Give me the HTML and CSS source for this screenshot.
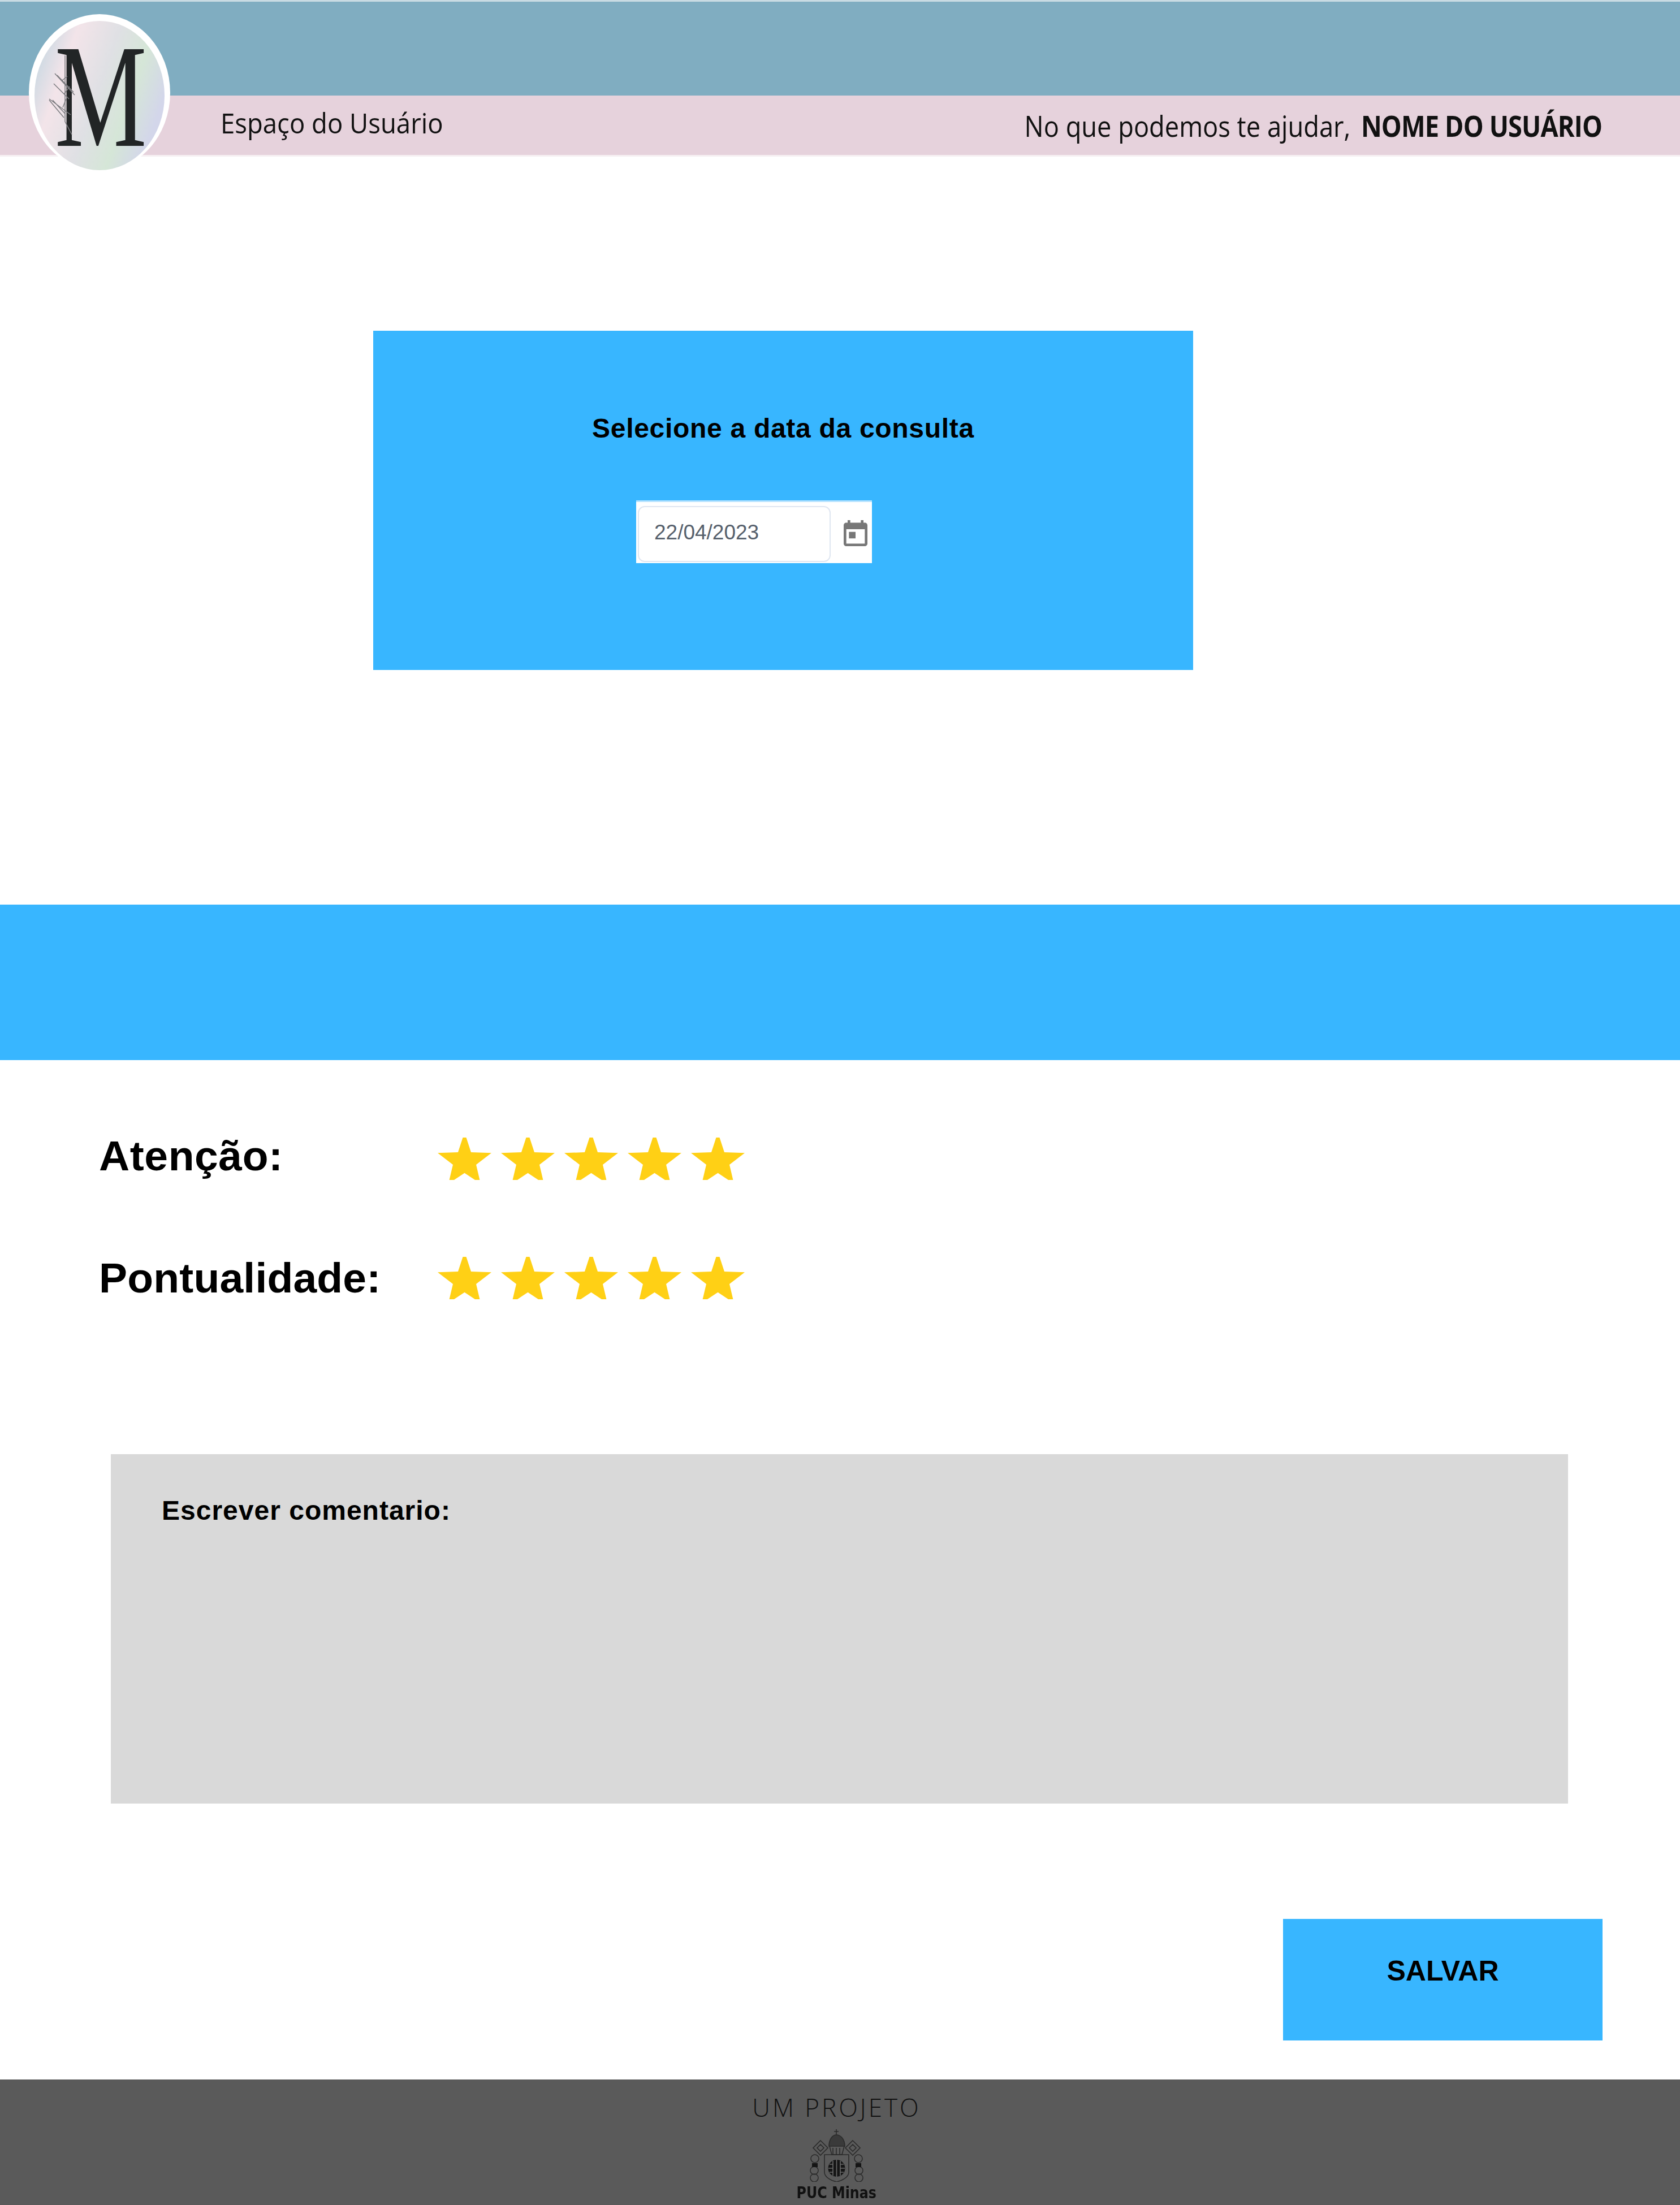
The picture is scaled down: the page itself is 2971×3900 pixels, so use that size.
FILE: index.html
```html
<!DOCTYPE html>
<html lang="pt-BR">
<head>
    <meta charset="UTF-8">
    <meta name="viewport" content="width=device-width, initial-scale=1.0">
    <title>Espaço do Usuário</title>
    <link rel="stylesheet" href="styles.css">
</head>
<body>
    <header class="header">
        <div class="header-top"></div>
        <div class="header-bottom">
            <span class="header-title">Espaço do Usuário</span>
            <span class="header-greeting">No que podemos te ajudar, <b class="user-name">NOME DO USUÁRIO</b></span>
        </div>
        <svg class="logo" viewBox="0 0 250 278">
            <defs>
                <linearGradient id="logoFill" x1="0" y1="0.1" x2="1" y2="0.5">
                    <stop offset="0" stop-color="#bdd5e0"/>
                    <stop offset="0.27" stop-color="#f3e4e9"/>
                    <stop offset="0.55" stop-color="#dfe0e4"/>
                    <stop offset="0.78" stop-color="#d5e6d7"/>
                    <stop offset="1" stop-color="#d3d6ea"/>
                </linearGradient>
            </defs>
            <ellipse cx="125" cy="139" rx="125" ry="139" fill="#fff"/>
            <ellipse cx="125" cy="144" rx="115" ry="132" fill="url(#logoFill)"/>
            <text class="logo-letter" transform="translate(46 233) scale(0.7 1)" x="0" y="0">M</text>
            <g class="logo-fern">
                <path d="M64 73V190L76 213"/>
                <path d="M46 105L81 143M50 108L79 138M44 123L71 150M58 118L68 110M62 142L72 128"/>
                <path d="M36 150L74 178M36 152L62 183M42 152L64 176M60 165L66 150"/>
            </g>
        </svg>
    </header>

    <section class="date-card">
        <h2 class="date-title">Selecione a data da consulta</h2>
        <div class="date-picker">
            <div class="date-input">22/04/2023</div>
            <svg class="date-icon" viewBox="3 1 18 20" preserveAspectRatio="none">
                <path d="M12 10H7v5h5zM16 1v2H8V1H6v2H5C3.89 3 3.01 3.9 3.01 5L3 19c0 1.1.89 2 2 2h14c1.1 0 2-.9 2-2V5c0-1.1-.9-2-2-2h-1V1h-2zm3 18H5V8h14v11z"/>
            </svg>
        </div>
    </section>

    <div class="band"></div>

    <section class="ratings">
        <div class="rating-row">
            <span class="rating-label rating-label-first">Atenção:</span>
            <div class="stars">
                <svg class="star" viewBox="0 0 95 75"><polygon points="44.5,0 50.5,0 59,26 95,27.3 68,48 74.4,75 66,75 47.5,62.7 29,75 20.6,75 27,48 0,27.3 36,26"/></svg>
                <svg class="star" viewBox="0 0 95 75"><polygon points="44.5,0 50.5,0 59,26 95,27.3 68,48 74.4,75 66,75 47.5,62.7 29,75 20.6,75 27,48 0,27.3 36,26"/></svg>
                <svg class="star" viewBox="0 0 95 75"><polygon points="44.5,0 50.5,0 59,26 95,27.3 68,48 74.4,75 66,75 47.5,62.7 29,75 20.6,75 27,48 0,27.3 36,26"/></svg>
                <svg class="star" viewBox="0 0 95 75"><polygon points="44.5,0 50.5,0 59,26 95,27.3 68,48 74.4,75 66,75 47.5,62.7 29,75 20.6,75 27,48 0,27.3 36,26"/></svg>
                <svg class="star" viewBox="0 0 95 75"><polygon points="44.5,0 50.5,0 59,26 95,27.3 68,48 74.4,75 66,75 47.5,62.7 29,75 20.6,75 27,48 0,27.3 36,26"/></svg>
            </div>
        </div>
        <div class="rating-row">
            <span class="rating-label">Pontualidade:</span>
            <div class="stars">
                <svg class="star" viewBox="0 0 95 75"><polygon points="44.5,0 50.5,0 59,26 95,27.3 68,48 74.4,75 66,75 47.5,62.7 29,75 20.6,75 27,48 0,27.3 36,26"/></svg>
                <svg class="star" viewBox="0 0 95 75"><polygon points="44.5,0 50.5,0 59,26 95,27.3 68,48 74.4,75 66,75 47.5,62.7 29,75 20.6,75 27,48 0,27.3 36,26"/></svg>
                <svg class="star" viewBox="0 0 95 75"><polygon points="44.5,0 50.5,0 59,26 95,27.3 68,48 74.4,75 66,75 47.5,62.7 29,75 20.6,75 27,48 0,27.3 36,26"/></svg>
                <svg class="star" viewBox="0 0 95 75"><polygon points="44.5,0 50.5,0 59,26 95,27.3 68,48 74.4,75 66,75 47.5,62.7 29,75 20.6,75 27,48 0,27.3 36,26"/></svg>
                <svg class="star" viewBox="0 0 95 75"><polygon points="44.5,0 50.5,0 59,26 95,27.3 68,48 74.4,75 66,75 47.5,62.7 29,75 20.6,75 27,48 0,27.3 36,26"/></svg>
            </div>
        </div>
    </section>

    <section class="comment-box">
        <span class="comment-label">Escrever comentario:</span>
    </section>

    <div class="actions">
        <button class="save-button" type="button">SALVAR</button>
    </div>

    <footer class="footer">
        <span class="footer-text">UM PROJETO</span>
        <svg class="crest" viewBox="0 0 97 93">
            <g class="crest-lines">
                <path d="M48 0V10M44 4H52"/>
                <path d="M35 30C35 18 41 10 48 10C56 10 63 18 63 30Z" class="crest-dome"/>
                <path d="M36 30L40 45H58L62 30M42 33V45M48 33V45M54 33V45"/>
                <path d="M20 20L33 33L20 46L7 33Z"/>
                <path d="M77 20L90 33L77 46L64 33Z"/>
                <path d="M14 33L20 27L26 33L20 39ZM71 33L77 27L83 33L77 39Z"/>
                <path d="M27 45H70V76C70 85 58 91 48.500 93C39 91 27 85 27 76Z"/>
                <circle cx="10" cy="52" r="7"/>
                <circle cx="87" cy="52" r="7"/>
                <circle cx="9" cy="73" r="7"/>
                <circle cx="88" cy="73" r="7"/>
                <circle cx="9" cy="86" r="7"/>
                <circle cx="88" cy="86" r="7"/>
            </g>
            <rect class="crest-dark" x="5" y="60" width="10" height="7"/>
            <rect class="crest-dark" x="82" y="60" width="10" height="7"/>
            <circle class="crest-dark" cx="48.500" cy="69" r="15"/>
            <path class="crest-gaps" d="M48.500 54V84M42 56V82M55 56V82M34 69H42M55 69H63M36 62H42M55 62H61M36 76H42M55 76H61"/>
        </svg>
        <span class="footer-brand">PUC Minas</span>
    </footer>
</body>
</html>
```

FILE: styles.css
```css
body {
    margin: 0;
    height: 3900px;
    overflow: hidden;
    background-color: #fff;
    font-family: "Liberation Sans", Arial, sans-serif;
    color: #000;
}

/* header */
.header {
    position: relative;
}
.header-top {
    height: 166px;
    background-color: #80adc1;
    border-top: 3px solid #c9dbe3;
}
.header-bottom {
    display: flex;
    justify-content: space-between;
    align-items: center;
    height: 105px;
    padding: 0 138px 0 390px;
    background-color: #e6d2dc;
    border-bottom: 3px solid #f6eff2;
    font-family: "Open Sans", sans-serif;
    color: #111;
}
.header-title {
    margin-top: -10px;
    font-size: 50px;
    transform: scaleX(0.91);
    transform-origin: left center;
}
.header-greeting {
    font-size: 52px;
    white-space: pre;
    transform: scaleX(0.87);
    transform-origin: right center;
}
.user-name {
    margin-left: 8px;
    font-weight: 700;
    letter-spacing: -1px;
}
.logo {
    position: absolute;
    left: 51px;
    top: 25px;
    width: 250px;
    height: 278px;
    overflow: visible;
}
.logo-letter {
    font-family: "Liberation Serif", serif;
    font-size: 261px;
    fill: #222526;
}
.logo-fern path {
    fill: none;
    stroke: #7c7c80;
    stroke-width: 1.5;
}

/* date card */
.date-card {
    display: flex;
    flex-direction: column;
    box-sizing: border-box;
    width: 1450px;
    height: 600px;
    margin: 308px 0 0 660px;
    padding-top: 145px;
    background-color: #38b6ff;
}
.date-title {
    margin: 0;
    font-size: 48px;
    line-height: 56px;
    font-weight: 700;
    letter-spacing: 0.7px;
    text-align: center;
}
.date-picker {
    display: flex;
    align-items: center;
    box-sizing: border-box;
    width: 417px;
    height: 111px;
    margin: 99px 0 0 465px;
    padding: 4px 6px 0 3px;
    background-color: #fff;
    border-top: 3px solid #b8e4ff;
}
.date-input {
    box-sizing: border-box;
    width: 341px;
    height: 99px;
    padding: 0 0 8px 27px;
    border: 2px solid #dfe6f1;
    border-radius: 12px;
    font-size: 37px;
    line-height: 89px;
    color: #56606c;
}
.date-icon {
    width: 42px;
    height: 46px;
    margin: -2px 0 0 23px;
    fill: #777;
}

.band {
    height: 275px;
    margin-top: 415px;
    background-color: #38b6ff;
}

/* ratings */
.ratings {
    display: flex;
    flex-direction: column;
    gap: 136px;
    margin-top: 137px;
    padding-left: 175px;
}
.rating-row {
    display: flex;
    align-items: center;
    height: 75px;
}
.rating-label {
    width: 599px;
    font-size: 75px;
    line-height: 75px;
    font-weight: 700;
    letter-spacing: 0.2px;
}
.rating-label-first {
    margin-top: -10px;
    letter-spacing: 0.6px;
}
.stars {
    display: flex;
    gap: 17px;
}
.star {
    width: 95px;
    height: 75px;
    fill: #ffd015;
}

/* comment */
.comment-box {
    box-sizing: border-box;
    width: 2577px;
    height: 618px;
    margin: 274px 0 0 196px;
    padding: 72px 0 0 90px;
    background-color: #d9d9d9;
}
.comment-label {
    font-size: 48px;
    line-height: 56px;
    font-weight: 700;
    letter-spacing: 1px;
}

.actions {
    display: flex;
    justify-content: flex-end;
    margin-top: 204px;
    padding-right: 137px;
}
.save-button {
    box-sizing: border-box;
    width: 565px;
    height: 215px;
    padding: 0 0 32px;
    border: 0;
    background-color: #38b6ff;
    font-family: "Liberation Sans", Arial, sans-serif;
    font-size: 50px;
    font-weight: 700;
    color: #000;
}

/* footer */
.footer {
    display: flex;
    flex-direction: column;
    align-items: center;
    box-sizing: border-box;
    height: 223px;
    margin-top: 69px;
    padding: 26px 12px 0 0;
    background-color: #5a5a5a;
    color: #111;
}
.footer-text {
    font-family: "Open Sans", sans-serif;
    font-size: 44px;
    line-height: 46px;
    font-weight: 300;
    letter-spacing: 4px;
}
.crest {
    width: 97px;
    height: 93px;
    margin-top: 16px;
    filter: blur(0.6px);
}
.crest-lines path, .crest-lines circle {
    fill: none;
    stroke: #2b2b2b;
    stroke-width: 1.6;
}
.crest-lines .crest-dome {
    fill: #3a3a3a;
}
.crest-dark {
    fill: #151515;
}
.crest-gaps {
    fill: none;
    stroke: #6a6a6a;
    stroke-width: 1.6;
}
.footer-brand {
    margin-top: 5px;
    font-family: "DejaVu Sans", sans-serif;
    font-size: 28px;
    line-height: 30px;
    font-weight: 700;
    transform: scaleX(0.85);
    filter: blur(0.5px);
}
```
